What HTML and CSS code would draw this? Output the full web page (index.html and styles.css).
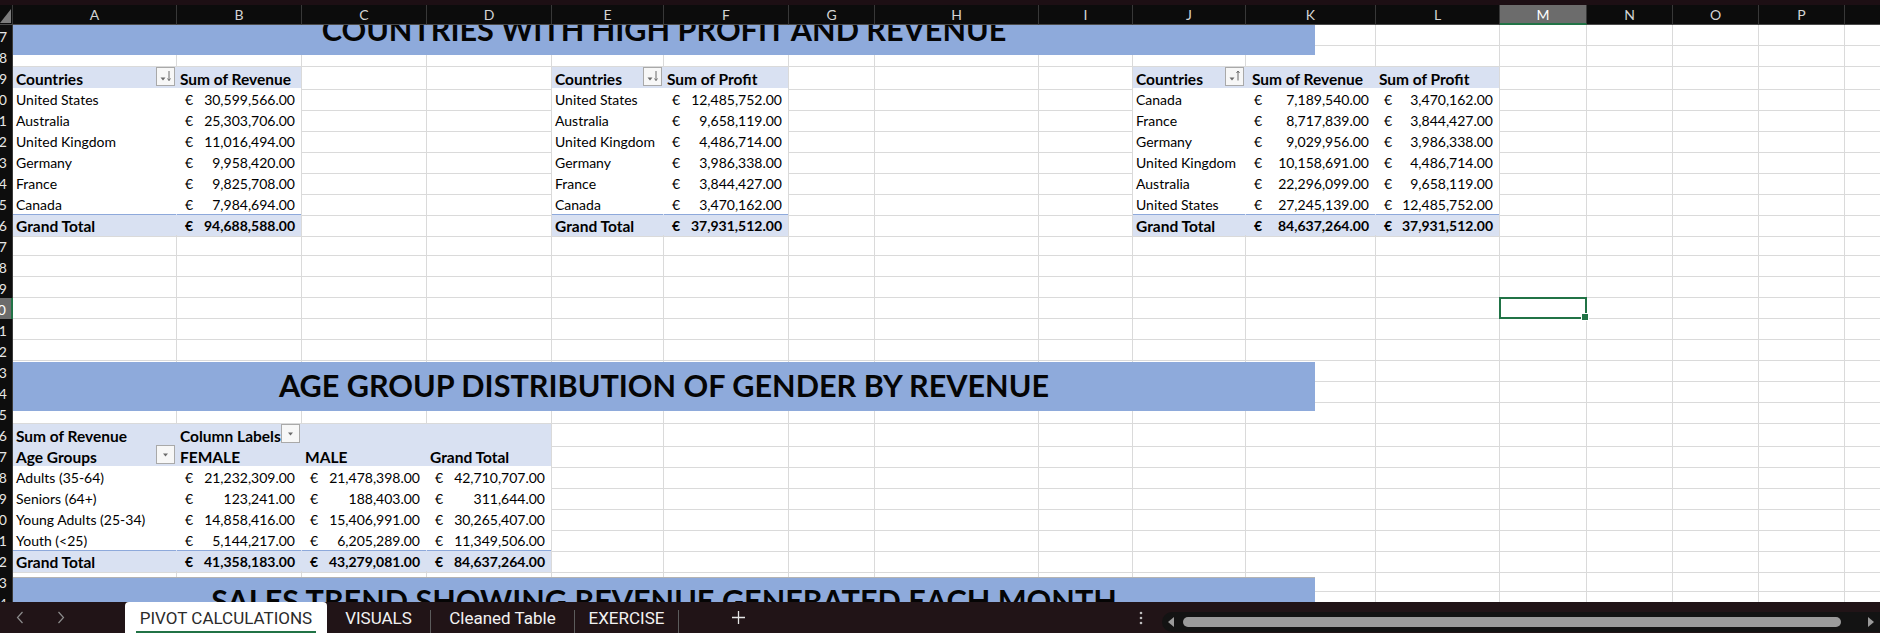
FILE: index.html
```html
<!DOCTYPE html>
<html lang="en">
<head>
<meta charset="utf-8">
<title>PIVOT CALCULATIONS</title>
<link rel="stylesheet" href="styles.css">
</head>
<body>
<div class="app">
  <div class="topbar"></div>
  <div class="colhdr cols">
    <div class="corner"><svg width="12" height="19" viewBox="0 0 12 19"><polygon points="11,4 11,18 0,18" fill="#7c7c7c"/></svg></div>
    <div>A</div><div>B</div><div>C</div><div>D</div><div>E</div><div>F</div><div>G</div><div>H</div><div>I</div><div>J</div><div>K</div><div>L</div><div class="m">M</div><div>N</div><div>O</div><div>P</div><div>Q</div>
  </div>
  <div class="sheet">
    <div class="r cols"><b class="h">7</b><i></i><i></i><i></i><i></i><i></i><i></i><i></i><i></i><i></i><i></i><i></i><i></i><i></i><i></i><i></i><i></i><i></i></div>
    <div class="r cols"><b class="h">8</b><i></i><i></i><i></i><i></i><i></i><i></i><i></i><i></i><i></i><i></i><i></i><i></i><i></i><i></i><i></i><i></i><i></i></div>
    <div class="r cols"><b class="h">9</b>
      <i class="pv hd bl">Countries<span class="dd"><svg width="17" height="17" viewBox="0 0 17 17"><path d="M3.5 9.5h5l-2.5 3z" fill="#6b6b6b"/><path d="M12 3v9.5M10.5 10.5l1.5 2 1.5-2" fill="none" stroke="#6b6b6b"/></svg></span></i>
      <i class="pv hd end">Sum of Revenue</i>
      <i></i><i></i>
      <i class="pv hd bl">Countries<span class="dd"><svg width="17" height="17" viewBox="0 0 17 17"><path d="M3.5 9.5h5l-2.5 3z" fill="#6b6b6b"/><path d="M12 3v9.5M10.5 10.5l1.5 2 1.5-2" fill="none" stroke="#6b6b6b"/></svg></span></i>
      <i class="pv hd end">Sum of Profit</i>
      <i></i><i></i><i></i>
      <i class="pv hd bl">Countries<span class="dd"><svg width="17" height="17" viewBox="0 0 17 17"><path d="M3.5 9.5h5l-2.5 3z" fill="#6b6b6b"/><path d="M12 12.5V3M10.5 5l1.5-2 1.5 2" fill="none" stroke="#6b6b6b"/></svg></span></i>
      <i class="pv hd k">Sum of Revenue</i>
      <i class="pv hd end">Sum of Profit</i>
      <i></i><i></i><i></i><i></i><i></i>
    </div>
    <div class="r cols"><b class="h">10</b>
      <i class="pv">United States</i><i class="pv a end"><span>€</span><span>30,599,566.00</span></i><i></i><i></i>
      <i class="pv">United States</i><i class="pv a end"><span>€</span><span>12,485,752.00</span></i><i></i><i></i><i></i>
      <i class="pv">Canada</i><i class="pv a"><span>€</span><span>7,189,540.00</span></i><i class="pv a end"><span>€</span><span>3,470,162.00</span></i>
      <i></i><i></i><i></i><i></i><i></i>
    </div>
    <div class="r cols"><b class="h">11</b>
      <i class="pv">Australia</i><i class="pv a end"><span>€</span><span>25,303,706.00</span></i><i></i><i></i>
      <i class="pv">Australia</i><i class="pv a end"><span>€</span><span>9,658,119.00</span></i><i></i><i></i><i></i>
      <i class="pv">France</i><i class="pv a"><span>€</span><span>8,717,839.00</span></i><i class="pv a end"><span>€</span><span>3,844,427.00</span></i>
      <i></i><i></i><i></i><i></i><i></i>
    </div>
    <div class="r cols"><b class="h">12</b>
      <i class="pv">United Kingdom</i><i class="pv a end"><span>€</span><span>11,016,494.00</span></i><i></i><i></i>
      <i class="pv">United Kingdom</i><i class="pv a end"><span>€</span><span>4,486,714.00</span></i><i></i><i></i><i></i>
      <i class="pv">Germany</i><i class="pv a"><span>€</span><span>9,029,956.00</span></i><i class="pv a end"><span>€</span><span>3,986,338.00</span></i>
      <i></i><i></i><i></i><i></i><i></i>
    </div>
    <div class="r cols"><b class="h">13</b>
      <i class="pv">Germany</i><i class="pv a end"><span>€</span><span>9,958,420.00</span></i><i></i><i></i>
      <i class="pv">Germany</i><i class="pv a end"><span>€</span><span>3,986,338.00</span></i><i></i><i></i><i></i>
      <i class="pv">United Kingdom</i><i class="pv a"><span>€</span><span>10,158,691.00</span></i><i class="pv a end"><span>€</span><span>4,486,714.00</span></i>
      <i></i><i></i><i></i><i></i><i></i>
    </div>
    <div class="r cols"><b class="h">14</b>
      <i class="pv">France</i><i class="pv a end"><span>€</span><span>9,825,708.00</span></i><i></i><i></i>
      <i class="pv">France</i><i class="pv a end"><span>€</span><span>3,844,427.00</span></i><i></i><i></i><i></i>
      <i class="pv">Australia</i><i class="pv a"><span>€</span><span>22,296,099.00</span></i><i class="pv a end"><span>€</span><span>9,658,119.00</span></i>
      <i></i><i></i><i></i><i></i><i></i>
    </div>
    <div class="r cols"><b class="h">15</b>
      <i class="pv">Canada</i><i class="pv a end"><span>€</span><span>7,984,694.00</span></i><i></i><i></i>
      <i class="pv">Canada</i><i class="pv a end"><span>€</span><span>3,470,162.00</span></i><i></i><i></i><i></i>
      <i class="pv">United States</i><i class="pv a"><span>€</span><span>27,245,139.00</span></i><i class="pv a end"><span>€</span><span>12,485,752.00</span></i>
      <i></i><i></i><i></i><i></i><i></i>
    </div>
    <div class="r cols"><b class="h">16</b>
      <i class="pv gt">Grand Total</i><i class="pv gt a end"><span>€</span><span>94,688,588.00</span></i><i></i><i></i>
      <i class="pv gt">Grand Total</i><i class="pv gt a end"><span>€</span><span>37,931,512.00</span></i><i></i><i></i><i></i>
      <i class="pv gt">Grand Total</i><i class="pv gt a"><span>€</span><span>84,637,264.00</span></i><i class="pv gt a end"><span>€</span><span>37,931,512.00</span></i>
      <i></i><i></i><i></i><i></i><i></i>
    </div>
    <div class="r cols"><b class="h">17</b><i></i><i></i><i></i><i></i><i></i><i></i><i></i><i></i><i></i><i></i><i></i><i></i><i></i><i></i><i></i><i></i><i></i></div>
    <div class="r cols"><b class="h">18</b><i></i><i></i><i></i><i></i><i></i><i></i><i></i><i></i><i></i><i></i><i></i><i></i><i></i><i></i><i></i><i></i><i></i></div>
    <div class="r cols"><b class="h">19</b><i></i><i></i><i></i><i></i><i></i><i></i><i></i><i></i><i></i><i></i><i></i><i></i><i></i><i></i><i></i><i></i><i></i></div>
    <div class="r cols"><b class="h on">20</b><i></i><i></i><i></i><i></i><i></i><i></i><i></i><i></i><i></i><i></i><i></i><i></i><i class="sel"></i><i></i><i></i><i></i><i></i></div>
    <div class="r cols"><b class="h">21</b><i></i><i></i><i></i><i></i><i></i><i></i><i></i><i></i><i></i><i></i><i></i><i></i><i></i><i></i><i></i><i></i><i></i></div>
    <div class="r cols"><b class="h">22</b><i></i><i></i><i></i><i></i><i></i><i></i><i></i><i></i><i></i><i></i><i></i><i></i><i></i><i></i><i></i><i></i><i></i></div>
    <div class="r cols"><b class="h">23</b><i></i><i></i><i></i><i></i><i></i><i></i><i></i><i></i><i></i><i></i><i></i><i></i><i></i><i></i><i></i><i></i><i></i></div>
    <div class="r cols"><b class="h">24</b><i></i><i></i><i></i><i></i><i></i><i></i><i></i><i></i><i></i><i></i><i></i><i></i><i></i><i></i><i></i><i></i><i></i></div>
    <div class="r cols"><b class="h">25</b><i></i><i></i><i></i><i></i><i></i><i></i><i></i><i></i><i></i><i></i><i></i><i></i><i></i><i></i><i></i><i></i><i></i></div>
    <div class="r cols"><b class="h">26</b>
      <i class="pv hd2">Sum of Revenue</i>
      <i class="pv hd2 bl">Column Labels<span class="dd"><svg width="17" height="17" viewBox="0 0 17 17"><path d="M6 7.5h5l-2.5 3z" fill="#6b6b6b"/></svg></span></i>
      <i class="pv hd2"></i><i class="pv hd2 end"></i>
      <i></i><i></i><i></i><i></i><i></i><i></i><i></i><i></i><i></i><i></i><i></i><i></i><i></i>
    </div>
    <div class="r cols"><b class="h">27</b>
      <i class="pv hd bl">Age Groups<span class="dd"><svg width="17" height="17" viewBox="0 0 17 17"><path d="M6 7.5h5l-2.5 3z" fill="#6b6b6b"/></svg></span></i>
      <i class="pv hd">FEMALE</i><i class="pv hd">MALE</i><i class="pv hd end">Grand Total</i>
      <i></i><i></i><i></i><i></i><i></i><i></i><i></i><i></i><i></i><i></i><i></i><i></i><i></i>
    </div>
    <div class="r cols"><b class="h">28</b>
      <i class="pv">Adults (35-64)</i><i class="pv a"><span>€</span><span>21,232,309.00</span></i><i class="pv a"><span>€</span><span>21,478,398.00</span></i><i class="pv a end"><span>€</span><span>42,710,707.00</span></i>
      <i></i><i></i><i></i><i></i><i></i><i></i><i></i><i></i><i></i><i></i><i></i><i></i><i></i>
    </div>
    <div class="r cols"><b class="h">29</b>
      <i class="pv">Seniors (64+)</i><i class="pv a"><span>€</span><span>123,241.00</span></i><i class="pv a"><span>€</span><span>188,403.00</span></i><i class="pv a end"><span>€</span><span>311,644.00</span></i>
      <i></i><i></i><i></i><i></i><i></i><i></i><i></i><i></i><i></i><i></i><i></i><i></i><i></i>
    </div>
    <div class="r cols"><b class="h">30</b>
      <i class="pv">Young Adults (25-34)</i><i class="pv a"><span>€</span><span>14,858,416.00</span></i><i class="pv a"><span>€</span><span>15,406,991.00</span></i><i class="pv a end"><span>€</span><span>30,265,407.00</span></i>
      <i></i><i></i><i></i><i></i><i></i><i></i><i></i><i></i><i></i><i></i><i></i><i></i><i></i>
    </div>
    <div class="r cols"><b class="h">31</b>
      <i class="pv">Youth (&lt;25)</i><i class="pv a"><span>€</span><span>5,144,217.00</span></i><i class="pv a"><span>€</span><span>6,205,289.00</span></i><i class="pv a end"><span>€</span><span>11,349,506.00</span></i>
      <i></i><i></i><i></i><i></i><i></i><i></i><i></i><i></i><i></i><i></i><i></i><i></i><i></i>
    </div>
    <div class="r cols"><b class="h">32</b>
      <i class="pv gt">Grand Total</i><i class="pv gt a"><span>€</span><span>41,358,183.00</span></i><i class="pv gt a"><span>€</span><span>43,279,081.00</span></i><i class="pv gt a end"><span>€</span><span>84,637,264.00</span></i>
      <i></i><i></i><i></i><i></i><i></i><i></i><i></i><i></i><i></i><i></i><i></i><i></i><i></i>
    </div>
    <div class="r cols"><b class="h">33</b><i></i><i></i><i></i><i></i><i></i><i></i><i></i><i></i><i></i><i></i><i></i><i></i><i></i><i></i><i></i><i></i><i></i></div>
    <div class="r cols"><b class="h">34</b><i></i><i></i><i></i><i></i><i></i><i></i><i></i><i></i><i></i><i></i><i></i><i></i><i></i><i></i><i></i><i></i><i></i></div>

    <div class="band b1">COUNTRIES WITH HIGH PROFIT AND REVENUE</div>
    <div class="band b2">AGE GROUP DISTRIBUTION OF GENDER BY REVENUE</div>
    <div class="band b3">SALES TREND SHOWING REVENUE GENERATED EACH MONTH</div>
  </div>
  <div class="tabbar">
    <div class="nav">
      <svg width="8" height="13" viewBox="0 0 8 13"><polyline points="6.5,1 1.5,6.5 6.5,12" fill="none" stroke="#8d8d8d" stroke-width="1.2"/></svg>
      <svg width="8" height="13" viewBox="0 0 8 13"><polyline points="1.5,1 6.5,6.5 1.5,12" fill="none" stroke="#8d8d8d" stroke-width="1.2"/></svg>
    </div>
    <div class="tab active">PIVOT CALCULATIONS</div>
    <div class="tab t-vis">VISUALS</div><span class="sep"></span>
    <div class="tab t-cln">Cleaned Table</div><span class="sep"></span>
    <div class="tab t-ex">EXERCISE</div><span class="sep"></span>
    <div class="add"><svg width="13" height="13" viewBox="0 0 13 13"><path d="M6.5 0v13M0 6.5h13" stroke="#e6e6e6" stroke-width="1.3"/></svg></div>
    <div class="more"><svg width="4" height="14" viewBox="0 0 4 14"><circle cx="2" cy="2" r="1.3" fill="#bdbdbd"/><circle cx="2" cy="7" r="1.3" fill="#bdbdbd"/><circle cx="2" cy="12" r="1.3" fill="#bdbdbd"/></svg></div>
    <div class="hscroll">
      <svg width="6" height="10" viewBox="0 0 6 10"><polygon points="6,0 6,10 0,5" fill="#9a9a9a"/></svg>
      <div class="thumb"></div>
      <svg width="6" height="10" viewBox="0 0 6 10"><polygon points="0,0 0,10 6,5" fill="#9a9a9a"/></svg>
    </div>
  </div>
</div>
</body>
</html>
```
FILE: styles.css
```css
* { box-sizing: border-box; }
html, body { margin: 0; padding: 0; background: #ffffff; }

.app {
  width: 1880px;
  height: 633px;
  overflow: hidden;
  display: flex;
  flex-direction: column;
  background: #ffffff;
  font-family: Lato, "Open Sans", sans-serif;
  font-size: 14px;
  color: #000;
}

.topbar { height: 5px; flex: none; background: #1d0f14; }

.cols {
  display: grid;
  grid-template-columns: 13px 164px 125px 125px 125px 112px 125px 86px 164px 94px 113px 130px 124px 87px 86px 86px 86px 86px;
}

.colhdr {
  height: 20px;
  flex: none;
  background: #0c0c0c;
  color: #d4d4d4;
}
.colhdr > div {
  display: flex;
  align-items: center;
  justify-content: center;
  border-right: 1px solid #383838;
  border-bottom: 1px solid #4a4a4a;
  font-size: 14px;
}
.colhdr > .m {
  background: #6c6c6c;
  color: #ffffff;
  border-bottom: 2px solid #217346;
}
.colhdr > .corner {
  align-items: flex-start;
  justify-content: flex-start;
  border-right: 1px solid #383838;
}

.sheet {
  flex: 1;
  position: relative;
  overflow: hidden;
}

.r { height: 21px; }
.r > * {
  display: flex;
  align-items: flex-start;
  min-width: 0;
  padding: 2px 3px 0;
  border-right: 1px solid #dadada;
  border-bottom: 1px solid #dadada;
  white-space: nowrap;
  font-style: normal;
  font-weight: 400;
  line-height: 20px;
}

.r > .h {
  justify-content: flex-end;
  overflow: hidden;
  padding: 2px 5px 0 0;
  background: #0d0d0d;
  color: #e6e6e6;
  border-right: 1px solid #3a3a3a;
  border-bottom: 0;
}
.r > .h.on {
  background: #6c6c6c;
  color: #ffffff;
  border-right: 2px solid #217346;
}

.r > .pv {
  background: #ffffff;
  border-right-color: transparent;
  border-bottom-color: transparent;
}
.r > .pv.end { border-right-color: #dadada; }
.r > .hd {
  background: #d9e1f2;
  font-weight: 700;
  font-size: 15.5px;
  border-bottom-color: #8ea9db;
}
.r > .hd.k { padding-left: 6px; }
.r > .hd2 {
  background: #d9e1f2;
  font-weight: 700;
  font-size: 15.5px;
}
.r > .gt {
  background: #d9e1f2;
  font-weight: 700;
  font-size: 15.5px;
  box-shadow: inset 0 1px 0 #8ea9db;
  border-bottom-color: #dadada;
}
.r > .a {
  justify-content: space-between;
  padding: 2px 6px 0 8px;
}
.r > .gt.a { font-size: 14px; }
.r > .bl {
  justify-content: space-between;
  padding-right: 1px;
}

.dd {
  display: flex;
  width: 19px;
  height: 19px;
  margin-top: -2px;
  border: 1px solid #a9a9a9;
  background: #f7f7f7;
}

.r > .sel { position: relative; }
.r > .sel::after {
  content: "";
  position: absolute;
  left: -1px;
  top: -1px;
  right: -1px;
  bottom: -1px;
  border: 2px solid #217346;
  z-index: 2;
}
.r > .sel::before {
  content: "";
  position: absolute;
  right: -3px;
  bottom: -3px;
  width: 6px;
  height: 6px;
  background: #217346;
  border: 1px solid #ffffff;
  z-index: 3;
}

.band {
  position: absolute;
  left: 13px;
  width: 1302px;
  height: 49px;
  padding-bottom: 3px;
  display: flex;
  align-items: center;
  justify-content: center;
  background: #8eaadb;
  color: #050505;
  font-family: Lato, sans-serif;
  font-weight: 700;
  font-size: 30.6px;
  white-space: nowrap;
  z-index: 1;
}
.b1 { top: -19px; }
.b2 { top: 337px; }
.b3 { top: 552px; border-top: 1px solid #b4b4b4; }

.tabbar {
  height: 31px;
  flex: none;
  display: flex;
  align-items: stretch;
  background: #211417;
  color: #f2f2f2;
  font-family: Roboto, sans-serif;
  font-size: 17px;
  position: relative;
  z-index: 4;
}
.nav {
  width: 125px;
  flex: none;
  display: flex;
  align-items: center;
  gap: 33px;
  padding-left: 16px;
}
.tab {
  flex: none;
  display: flex;
  align-items: center;
  justify-content: center;
  white-space: nowrap;
}
.tab.active {
  width: 202px;
  background: #ffffff;
  color: #2b2b2b;
  border-radius: 4px 4px 0 0;
  position: relative;
}
.tab.active::after {
  content: "";
  position: absolute;
  left: 11px;
  right: 11px;
  bottom: 0;
  height: 2px;
  background: #217346;
}
.t-vis { width: 103px; }
.t-cln { width: 143px; }
.t-ex { width: 103px; }
.sep {
  width: 1px;
  flex: none;
  align-self: flex-end;
  height: 23px;
  background: #5c5c5c;
}
.add {
  display: flex;
  align-items: center;
  margin-left: 53px;
}
.more {
  width: 20px;
  margin-left: auto;
  display: flex;
  align-items: center;
  justify-content: center;
}
.hscroll {
  width: 718px;
  flex: none;
  margin-left: 11px;
  align-self: flex-end;
  height: 20px;
  margin-bottom: 1px;
  background: #131313;
  border-radius: 10px 0 0 10px;
  display: flex;
  align-items: center;
  padding-left: 6px;
}
.thumb {
  width: 658px;
  height: 10px;
  margin-left: 9px;
  margin-right: 27px;
  border-radius: 5px;
  background: #9b9b9b;
}
```
